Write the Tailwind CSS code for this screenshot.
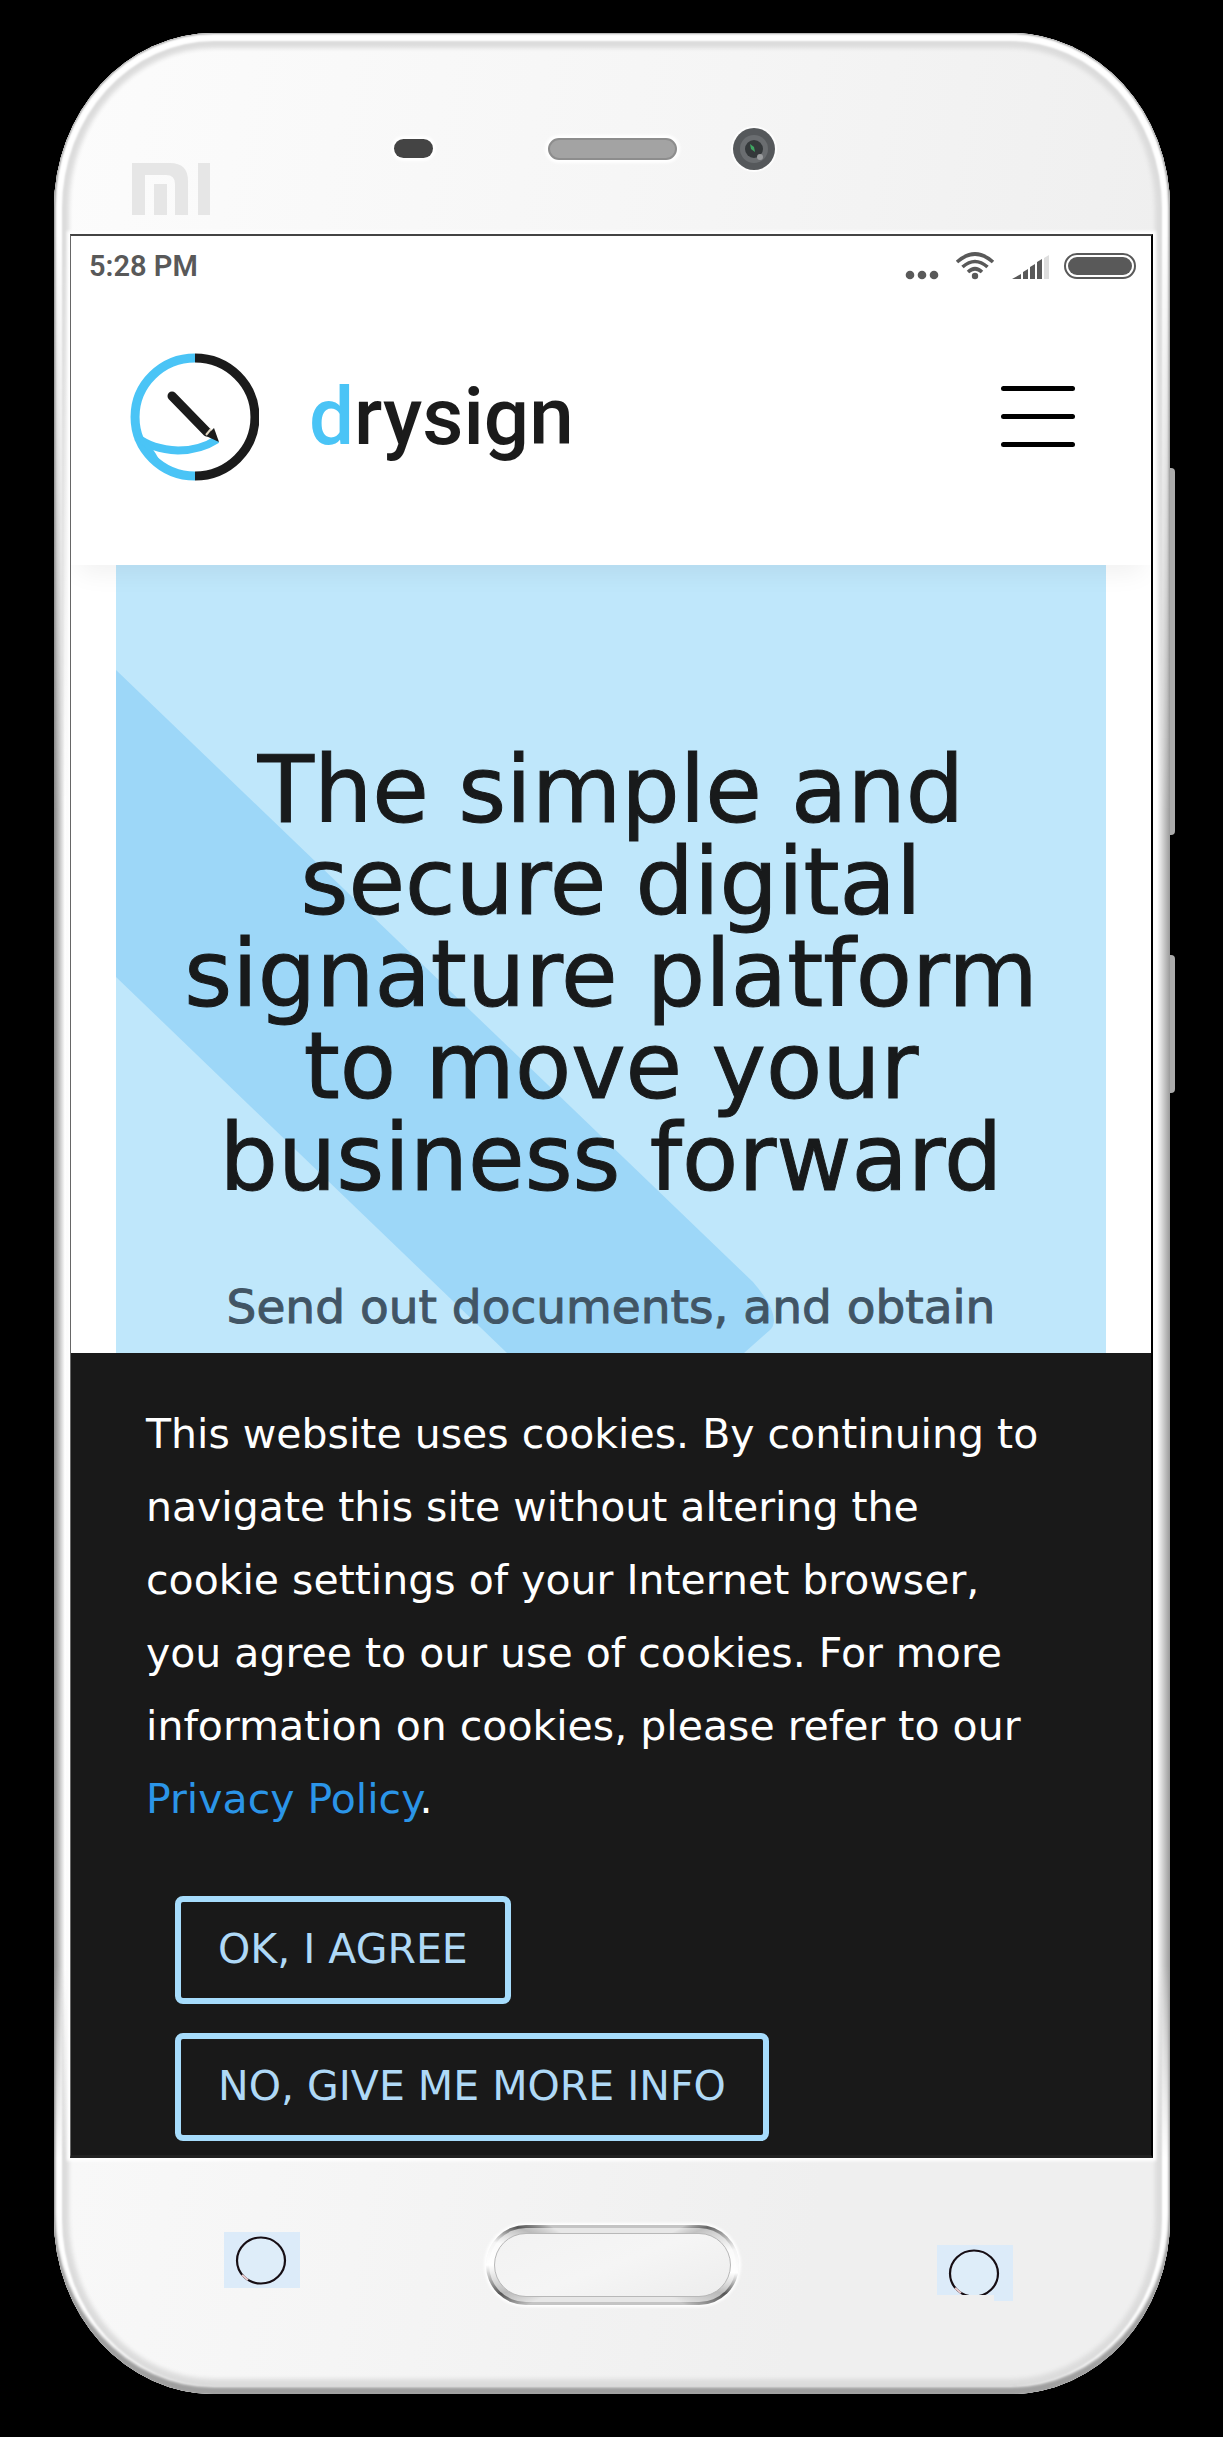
<!DOCTYPE html>
<html lang="en">
<head>
<meta charset="utf-8">
<meta name="viewport" content="width=device-width, initial-scale=1">
<title>DrySign</title>
<script src="https://cdn.jsdelivr.net/npm/@tailwindcss/browser@4"></script>
</head>
<body class="min-h-screen bg-black pt-[33px] pr-[53px] pb-11 pl-[54px] font-['DejaVu_Sans',sans-serif]">
<div class="relative">
  <!-- side keys -->
  <span class="absolute -right-[5px] top-[435px] h-[367px] w-3 rounded-r-sm bg-[#ababab]"></span>
  <span class="absolute -right-[5px] top-[922px] h-[138px] w-3 rounded-r-sm bg-[#ababab]"></span>

  <!-- phone body -->
  <div class="relative overflow-hidden rounded-[160px/175px] bg-[linear-gradient(100deg,#fcfcfc_0%,#f5f5f5_45%,#efefef_75%)] shadow-[inset_0_0_2px_1px_#a3a3a3,inset_0_-6px_3px_1px_#a0a0a0,inset_0_0_2px_8px_#ffffff,inset_0_0_4px_15px_#dcdcdc]">

    <!-- top bezel -->
    <div class="flex h-[201px] items-start pt-[93px] pl-[78px]">
      <svg class="mt-[37px] h-[52px] w-[78px] shrink-0" viewBox="0 0 78 52" fill="#e6e6e6" aria-label="Mi" role="img">
        <path d="M0 0h38q18 0 18 18v34H43V21q0-9-9-9H13v40H0zM22 21h13v31H22zM66 0h12v52H66z"/>
      </svg>
      <span class="mt-[13px] ml-[184px] h-[19px] w-[39px] shrink-0 rounded-full bg-[#444] shadow-[0_0_3px_3px_#fff]"></span>
      <span class="mt-3 ml-[115px] h-[22px] w-[129px] shrink-0 rounded-full border-2 border-[#8d8d8d] bg-[#a3a3a3] shadow-[0_0_3px_3px_#fff]"></span>
      <svg class="ml-[54px] h-[46px] w-[46px] shrink-0" viewBox="0 0 46 46" aria-hidden="true">
        <circle cx="23" cy="23" r="23" fill="#fff" opacity=".8"/>
        <circle cx="23" cy="23" r="21" fill="#55585b"/>
        <circle cx="23" cy="23" r="14" fill="#6a6d70"/>
        <circle cx="23" cy="23" r="9" fill="#34383a"/>
        <path d="M19 18l4 3 1 5-4-3z" fill="#3fa662"/>
        <circle cx="29" cy="31" r="3" fill="#9a9c9e"/>
      </svg>
    </div>

    <div class="relative pr-[17px] pl-4">
      <!-- metal rim along both sides -->
      <div class="absolute inset-0 bg-[linear-gradient(to_right,#858585,#ffffff_11px,#eeeeee_16px,transparent_30px,transparent_calc(100%_-_30px),#ffffff_calc(100%_-_13px),#9a9a9a)] mask-[linear-gradient(to_bottom,transparent,black_30%,black_90%,transparent)]"></div>

      <!-- screen -->
      <div class="relative overflow-hidden border-t-2 border-r-2 border-b-3 border-l border-t-[#444] border-r-black border-b-[#222] border-l-[#666] bg-white shadow-[0_0_3px_3px_#fff]">

        <div class="flex items-center justify-between pt-3 pr-[14px] pl-[18px] text-[#595959]">
          <span class="font-['Roboto',sans-serif] text-[29px] leading-9 font-semibold">5:28 PM</span>
          <svg class="h-7 w-[232px]" viewBox="905 251 232 28" fill="#595959" aria-label="Wi-Fi, signal and battery status" role="img">
            <circle cx="910" cy="274" r="4.3"/><circle cx="922" cy="274" r="4.3"/><circle cx="934" cy="274" r="4.3"/>
            <circle cx="975" cy="275" r="3.2"/>
            <g fill="none" stroke="#595959" stroke-width="3.6">
              <path d="M957 261q18-16 36 0M962.500 266q12.500-11 25 0M968 271q7-6.500 14 0"/>
            </g>
            <path d="M1012 278l9-5v5zM1023 271l5-3v10h-5zM1030 266l5-3v15h-5zM1037 261l5-3v20h-5z"/>
            <path d="M1044 257l5-3v24h-5z" fill="#dedede"/>
            <rect x="1065" y="253" width="70" height="24" rx="12" fill="none" stroke="#595959" stroke-width="2"/>
            <rect x="1068" y="256" width="64" height="18" rx="9"/>
          </svg>
        </div>

        <header class="relative z-10 flex h-[281px] items-center justify-between bg-white pr-[76px] pl-[58px] shadow-[0_16px_24px_-8px_rgba(0,0,0,0.06)]">
          <a href="#" class="-mt-4 flex items-center gap-[50px]">
            <svg class="mt-7 mb-7 h-[128px] w-[130px]" viewBox="131 354 130 128" fill="none" aria-hidden="true">
              <path d="M197 359A60 59 0 0 0 197 477" stroke="#4ac4f6" stroke-width="9"/>
              <path d="M197 359A60 59 0 0 1 197 477" stroke="#1b1b1b" stroke-width="9"/>
              <path d="M139 438q14 12 41 13.500 22 0 39-11" stroke="#4ac4f6" stroke-width="8"/>
              <path d="M143 440q10 10 16 22" stroke="#4ac4f6" stroke-width="5"/>
              <path d="M174 397l35 36" stroke="#1b1b1b" stroke-width="9" stroke-linecap="round"/>
              <path d="M208 437l8-8 5 14z" fill="#1b1b1b"/>
              <path d="M208 436l5-6" stroke="#e3d8c3" stroke-width="2"/>
            </svg>
            <span class="font-['Roboto',sans-serif] text-[80px] leading-[96px] font-medium text-[#1b1b1b]"><span class="text-[#4ac4f6]">d</span>rysign</span>
          </a>
          <button type="button" aria-label="Open menu" class="mb-[17px] flex w-[74px] flex-col gap-[23px]">
            <span class="h-[5px] w-full rounded-full bg-black"></span>
            <span class="h-[5px] w-full rounded-full bg-black"></span>
            <span class="h-[5px] w-full rounded-full bg-black"></span>
          </button>
        </header>

        <main class="relative mr-[45px] ml-[45px] overflow-hidden bg-[#bfe7fb] pt-[180px] pb-[10px] text-center">
          <svg class="absolute inset-0 h-full w-full" viewBox="0 0 990 788" preserveAspectRatio="none" aria-hidden="true">
            <path d="M0 105L637 717Q667 752 654 765L628 788H391L0 412z" fill="#9dd7f8"/>
          </svg>
          <h1 class="relative text-[92px] leading-[92px] whitespace-nowrap text-[#181a1b] [-webkit-text-stroke:1px]">The simple and<br>secure digital<br>signature platform<br>to move your<br>business forward</h1>
          <p class="relative mt-[66px] text-[47px] leading-[72px] whitespace-nowrap text-[#415565] [-webkit-text-stroke:1px]">Send out documents, and obtain</p>
        </main>

        <section class="bg-[#191919] pt-[45px] pb-[14px] pl-[75px]" aria-label="Cookie notice">
          <p class="text-[41px] leading-[73px] whitespace-nowrap text-white">This website uses cookies. By continuing to<br>navigate this site without altering the<br>cookie settings of your Internet browser,<br>you agree to our use of cookies. For more<br>information on cookies, please refer to our<br><a href="#" class="text-[#2b95e8]">Privacy Policy</a>.</p>
          <div class="mt-[60px] ml-[29px] flex flex-col items-start gap-[29px]">
            <button type="button" class="h-[108px] rounded-lg border-6 border-[#a6dcfc] px-[37px] text-[41px] text-[#afd9f7]">OK, I AGREE</button>
            <button type="button" class="h-[108px] rounded-lg border-6 border-[#a6dcfc] px-[37px] text-[41px] text-[#afd9f7]">NO, GIVE ME MORE INFO</button>
          </div>
        </section>
      </div>
    </div>

    <!-- bottom bezel -->
    <div class="grid h-[236px] grid-cols-[1fr_253px_1fr] items-start pt-[67px]">
      <svg class="mt-[7px] ml-[170px] h-14 w-[76px]" viewBox="0 0 76 56" aria-hidden="true">
        <path d="M0 0h76v56H0z" fill="#dcebf9"/>
        <ellipse cx="37" cy="28.500" rx="24" ry="23" fill="#deedf9" stroke="#170e14" stroke-width="2.200"/>
        <path d="M18 43l6 5" stroke="#e9c9cc" stroke-width="2"/>
      </svg>
      <div class="h-[80px] rounded-full bg-[conic-gradient(from_0deg,#c4c4c4_0_17%,#666_19%,#f4f4f4_23%,#fff_26%,#555_29%,#c4c4c4_33%_68%,#555_71%,#fff_75%,#f4f4f4_78%,#555_81%,#c4c4c4_84%)] p-[3px] shadow-[0_0_3px_2px_#fff]">
        <div class="h-full rounded-full bg-white/60 p-[5px]">
          <div class="h-full rounded-full border border-[#b8b8b8] bg-[linear-gradient(160deg,#f2f2f2,#f5f5f5_50%,#ededed)]"></div>
        </div>
      </div>
      <svg class="mt-5 mr-[157px] h-14 w-[76px] justify-self-end" viewBox="0 0 76 56" aria-hidden="true">
        <clipPath id="key"><path d="M0 0h76v56H57v-6H0z"/></clipPath>
        <g clip-path="url(#key)">
          <path d="M0 0h76v56H0z" fill="#dcebf9"/>
          <ellipse cx="37" cy="28.500" rx="24" ry="23" fill="#deedf9" stroke="#170e14" stroke-width="2.200"/>
          <path d="M18 43l6 5" stroke="#e9c9cc" stroke-width="2"/>
        </g>
      </svg>
    </div>
  </div>
</div>
</body>
</html>
